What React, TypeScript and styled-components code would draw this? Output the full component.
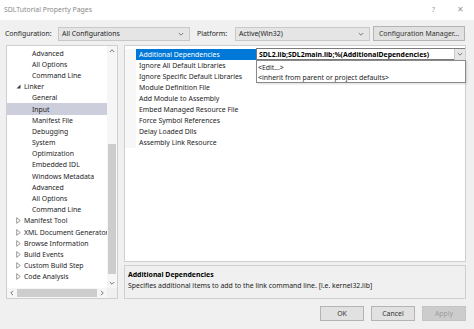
import styled, { createGlobalStyle } from 'styled-components'

const GlobalStyle = createGlobalStyle`
  html, body {
    margin: 0;
    padding: 0;
    background: #f0f0f0;
  }
  * { box-sizing: border-box; }
`;

type TreeItem = { label: string; level: number; expander?: 'open' | 'closed'; selected?: boolean };

const treeItems: TreeItem[] = [
  { label: 'Advanced', level: 1 },
  { label: 'All Options', level: 1 },
  { label: 'Command Line', level: 1 },
  { label: 'Linker', level: 0, expander: 'open' },
  { label: 'General', level: 1 },
  { label: 'Input', level: 1, selected: true },
  { label: 'Manifest File', level: 1 },
  { label: 'Debugging', level: 1 },
  { label: 'System', level: 1 },
  { label: 'Optimization', level: 1 },
  { label: 'Embedded IDL', level: 1 },
  { label: 'Windows Metadata', level: 1 },
  { label: 'Advanced', level: 1 },
  { label: 'All Options', level: 1 },
  { label: 'Command Line', level: 1 },
  { label: 'Manifest Tool', level: 0, expander: 'closed' },
  { label: 'XML Document Generator', level: 0, expander: 'closed' },
  { label: 'Browse Information', level: 0, expander: 'closed' },
  { label: 'Build Events', level: 0, expander: 'closed' },
  { label: 'Custom Build Step', level: 0, expander: 'closed' },
  { label: 'Code Analysis', level: 0, expander: 'closed' },
];

const properties = [
  'Additional Dependencies',
  'Ignore All Default Libraries',
  'Ignore Specific Default Libraries',
  'Module Definition File',
  'Add Module to Assembly',
  'Embed Managed Resource File',
  'Force Symbol References',
  'Delay Loaded Dlls',
  'Assembly Link Resource',
];

const Chevron = ({ dir = 'down', color = '#606060' }: { dir?: 'down' | 'up' | 'left' | 'right'; color?: string }) => {
  const rot = { down: 0, up: 180, left: 90, right: -90 }[dir];
  return (
    <svg width="6" height="6" viewBox="0 0 6 6" style={{ transform: `rotate(${rot}deg)` }}>
      <path d="M0.8 2 L3 4.2 L5.2 2" fill="none" stroke={color} strokeWidth="0.8" />
    </svg>
  );
};

const Expander = ({ open }: { open: boolean }) =>
  open ? (
    <svg width="5" height="5" viewBox="0 0 5 5">
      <path d="M4.5 0.5 L4.5 4.5 L0.5 4.5 Z" fill="#404040" />
    </svg>
  ) : (
    <svg width="5" height="7" viewBox="0 0 5 7">
      <path d="M0.7 0.7 L4.2 3.5 L0.7 6.3 Z" fill="none" stroke="#707070" strokeWidth="0.7" />
    </svg>
  );

export default function App() {
  return (
    <>
      <GlobalStyle />
      <Dialog>
        <TitleBar>
          <Title>SDLTutorial Property Pages</Title>
          <TitleButtons>
            <TitleGlyph>?</TitleGlyph>
            <TitleGlyph>✕</TitleGlyph>
          </TitleButtons>
        </TitleBar>

        <ConfigRow>
          <Label>Configuration:</Label>
          <Combo $width={132}>
            <span>All Configurations</span>
            <Chevron />
          </Combo>
          <Label $left={7}>Platform:</Label>
          <Combo $width={135}>
            <span>Active(Win32)</span>
            <Chevron />
          </Combo>
          <PushButton $width={92} $left={3}>Configuration Manager...</PushButton>
        </ConfigRow>

        <MainRow>
          <TreeBox>
            <TreeList>
              {treeItems.map((item, i) => (
                <TreeRow key={i} $selected={item.selected}>
                  <ExpanderSlot $level={item.level}>
                    {item.expander && <Expander open={item.expander === 'open'} />}
                  </ExpanderSlot>
                  <TreeLabel>{item.label}</TreeLabel>
                </TreeRow>
              ))}
            </TreeList>
            <VScroll>
              <ArrowCell><Chevron dir="up" color="#505050" /></ArrowCell>
              <VTrack>
                <VThumb />
              </VTrack>
              <ArrowCell><Chevron dir="down" color="#505050" /></ArrowCell>
            </VScroll>
            <HScroll>
              <ArrowCell><Chevron dir="left" color="#505050" /></ArrowCell>
              <HTrack>
                <HThumb />
              </HTrack>
              <ArrowCell><Chevron dir="right" color="#505050" /></ArrowCell>
            </HScroll>
            <Corner />
          </TreeBox>

          <RightColumn>
            <PropGrid>
              {properties.map((name, i) => (
                <PropRow key={name}>
                  <Gutter />
                  <PropName $selected={i === 0}>{name}</PropName>
                  {i === 0 ? (
                    <ValueEditor>
                      <ValueText>SDL2.lib;SDL2main.lib;%(AdditionalDependencies)</ValueText>
                      <DropButton><Chevron /></DropButton>
                    </ValueEditor>
                  ) : (
                    <PropValue />
                  )}
                </PropRow>
              ))}
              <DropList>
                <DropItem>&lt;Edit...&gt;</DropItem>
                <DropItem>&lt;inherit from parent or project defaults&gt;</DropItem>
              </DropList>
            </PropGrid>
            <DescPanel>
              <DescTitle>Additional Dependencies</DescTitle>
              <DescText>Specifies additional items to add to the link command line. [i.e. kernel32.lib]</DescText>
            </DescPanel>
          </RightColumn>
        </MainRow>

        <ButtonRow>
          <PushButton $width={44}>OK</PushButton>
          <PushButton $width={44}>Cancel</PushButton>
          <PushButton $width={44} $disabled>Apply</PushButton>
        </ButtonRow>
      </Dialog>
    </>
  );
}

const Dialog = styled.div`
  width: 474px;
  height: 329px;
  display: flex;
  flex-direction: column;
  background: #f0f0f0;
  font-family: "Noto Sans", "Open Sans", sans-serif;
  font-size: 6.9px;
  color: #1e1e1e;
  overflow: hidden;
`;

const TitleBar = styled.div`
  height: 20px;
  flex: none;
  display: flex;
  align-items: center;
  justify-content: space-between;
  padding: 0 10px 2px 4px;
  background: #ffffff;
`;

const Title = styled.div`
  color: #8a8a8a;
`;

const TitleButtons = styled.div`
  display: flex;
  gap: 22px;
  color: #9a9a9a;
  font-size: 7.5px;
`;

const TitleGlyph = styled.span``;

const ConfigRow = styled.div`
  height: 25px;
  flex: none;
  display: flex;
  align-items: center;
  padding: 2px 0 0 5px;
`;

const Label = styled.span<{ $left?: number }>`
  width: ${p => (p.$left ? 38 : 53)}px;
  margin-left: ${p => p.$left ?? 0}px;
  color: #1e1e1e;
`;

const Combo = styled.div<{ $width: number }>`
  width: ${p => p.$width}px;
  height: 14px;
  display: flex;
  align-items: center;
  justify-content: space-between;
  padding: 0 5px 0 3px;
  background: #e5e5e5;
  border: 1px solid #c9c9c9;
`;

const PushButton = styled.div<{ $width: number; $left?: number; $disabled?: boolean }>`
  width: ${p => p.$width}px;
  height: 15px;
  margin-left: ${p => p.$left ?? 0}px;
  display: flex;
  align-items: center;
  justify-content: center;
  background: ${p => (p.$disabled ? '#cccccc' : '#e1e1e1')};
  border: 1px solid ${p => (p.$disabled ? '#c4c4c4' : '#b4b4b4')};
  color: ${p => (p.$disabled ? '#9c9c9c' : '#333333')};
  white-space: nowrap;
`;

const MainRow = styled.div`
  height: 254px;
  flex: none;
  display: flex;
  gap: 6px;
  padding: 0 8px 0 6px;
`;

const TreeBox = styled.div`
  width: 112px;
  flex: none;
  display: grid;
  grid-template-columns: 1fr 10px;
  grid-template-rows: 1fr 10px;
  background: #ffffff;
  border: 1px solid #cfcfcf;
`;

const TreeList = styled.div`
  overflow: hidden;
  padding-top: 1.5px;
`;

const TreeRow = styled.div<{ $selected?: boolean }>`
  height: 11.2px;
  display: flex;
  align-items: center;
  white-space: nowrap;
  background: ${p => (p.$selected ? '#cccedb' : 'transparent')};
`;

const ExpanderSlot = styled.span<{ $level: number }>`
  width: ${p => (p.$level ? 25 : 17)}px;
  flex: none;
  display: flex;
  justify-content: flex-end;
  padding-right: 3px;
`;

const TreeLabel = styled.span`
  color: #1e1e1e;
`;

const VScroll = styled.div`
  display: flex;
  flex-direction: column;
  background: #f6f6f6;
`;

const ArrowCell = styled.div`
  width: 10px;
  height: 10px;
  flex: none;
  display: flex;
  align-items: center;
  justify-content: center;
`;

const VTrack = styled.div`
  flex: 1;
  display: flex;
  flex-direction: column;
  justify-content: flex-end;
  padding: 0 1px 4px;
`;

const VThumb = styled.div`
  height: 130px;
  background: #cdcdcd;
`;

const HScroll = styled.div`
  display: flex;
  background: #f6f6f6;
`;

const HTrack = styled.div`
  flex: 1;
  display: flex;
  padding: 1px 0;
`;

const HThumb = styled.div`
  width: 80px;
  background: #cdcdcd;
`;

const Corner = styled.div`
  background: #f0f0f0;
`;

const RightColumn = styled.div`
  flex: 1;
  display: flex;
  flex-direction: column;
  gap: 3px;
`;

const PropGrid = styled.div`
  position: relative;
  height: 217px;
  padding-top: 3px;
  background: #ffffff;
  border: 1px solid #cfcfcf;
`;

const PropRow = styled.div`
  height: 11px;
  display: grid;
  grid-template-columns: 11px 120px 1fr;
  align-items: stretch;
`;

const Gutter = styled.div`
  background: #f7f7f7;
`;

const PropName = styled.div<{ $selected?: boolean }>`
  display: flex;
  align-items: center;
  padding-left: 3px;
  white-space: nowrap;
  overflow: hidden;
  background: ${p => (p.$selected ? '#0078d7' : 'transparent')};
  color: ${p => (p.$selected ? '#ffffff' : '#1e1e1e')};
`;

const PropValue = styled.div``;

const ValueEditor = styled.div`
  display: flex;
  align-items: center;
  justify-content: space-between;
  border: 1px solid #7a7a7a;
  border-right: none;
  margin-top: -1px;
  height: 12px;
`;

const ValueText = styled.span`
  padding-left: 2px;
  font-weight: 700;
  color: #000000;
  white-space: nowrap;
`;

const DropButton = styled.div`
  width: 11px;
  height: 11px;
  display: flex;
  align-items: center;
  justify-content: center;
  background: #e6e6e6;
  border-left: 1px solid #c8c8c8;
`;

const DropList = styled.div`
  position: absolute;
  top: 14px;
  left: 131px;
  right: -1px;
  height: 23px;
  padding: 1px 0 0 1px;
  background: #ffffff;
  border: 1px solid #8a8a8a;
  box-shadow: 1px 1px 2px rgba(0, 0, 0, 0.15);
`;

const DropItem = styled.div`
  height: 10.5px;
  display: flex;
  align-items: center;
  color: #1e1e1e;
`;

const DescPanel = styled.div`
  height: 34px;
  padding: 3px 3px;
  background: #f0f0f0;
  border: 1px solid #cfcfcf;
`;

const DescTitle = styled.div`
  font-weight: 700;
  color: #000000;
  line-height: 11px;
`;

const DescText = styled.div`
  color: #1e1e1e;
  line-height: 11px;
`;

const ButtonRow = styled.div`
  flex: 1;
  display: flex;
  justify-content: flex-end;
  align-items: flex-start;
  gap: 7px;
  padding: 7px 8px 0 0;
`;
